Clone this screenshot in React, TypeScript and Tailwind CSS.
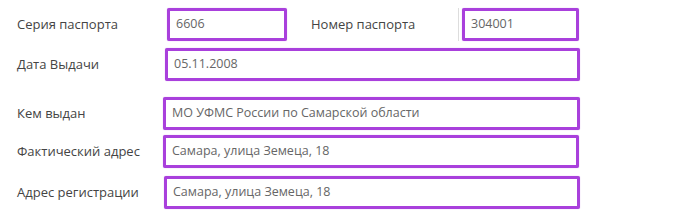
import React from "react";

interface FieldProps {
  value: string;
  className?: string;
}

const Field: React.FC<FieldProps> = ({ value, className = "" }) => (
  <div
    className={`flex h-[33px] items-center rounded-[2px] border-[3px] border-[#a940dc] bg-white pl-[6px] text-[12.5px] text-[#666] shadow-[0_0_1px_#c98ae8] ${className}`}
  >
    {value}
  </div>
);

const Label: React.FC<{ text: string; className?: string }> = ({ text, className = "" }) => (
  <span className={`text-[13px] text-[#444] ${className}`}>{text}</span>
);

export default function App() {
  return (
    <div
      className="h-[212px] w-[700px] bg-white pl-[17px] pt-[8px]"
      style={{ fontFamily: '"Open Sans", "Liberation Sans", sans-serif' }}
    >
      {/* серия / номер */}
      <div className="flex items-center">
        <Label text="Серия паспорта" className="w-[150px]" />
        <Field value="6606" className="w-[120px]" />
        <Label text="Номер паспорта" className="ml-[24px] w-[147px] pr-[4px]" />
        <div className="border-l border-[#ddd] pl-[3px]">
          <Field value="304001" className="w-[117px]" />
        </div>
      </div>

      <div className="mt-[7px] flex items-center">
        <Label text="Дата Выдачи" className="w-[148px]" />
        <Field value="05.11.2008" className="w-[415px]" />
      </div>

      <div className="mt-[16px] flex items-center">
        <Label text="Кем выдан" className="w-[146px]" />
        <Field value="МО УФМС России по Самарской области" className="w-[417px]" />
      </div>

      <div className="mt-[5px] flex items-center">
        <Label text="Фактический адрес" className="w-[146px]" />
        <Field value="Самара, улица Земеца, 18" className="w-[416px]" />
      </div>

      <div className="mt-[8px] flex items-center">
        <Label text="Адрес регистрации" className="w-[147px]" />
        <Field value="Самара, улица Земеца, 18" className="w-[416px]" />
      </div>
    </div>
  );
}
